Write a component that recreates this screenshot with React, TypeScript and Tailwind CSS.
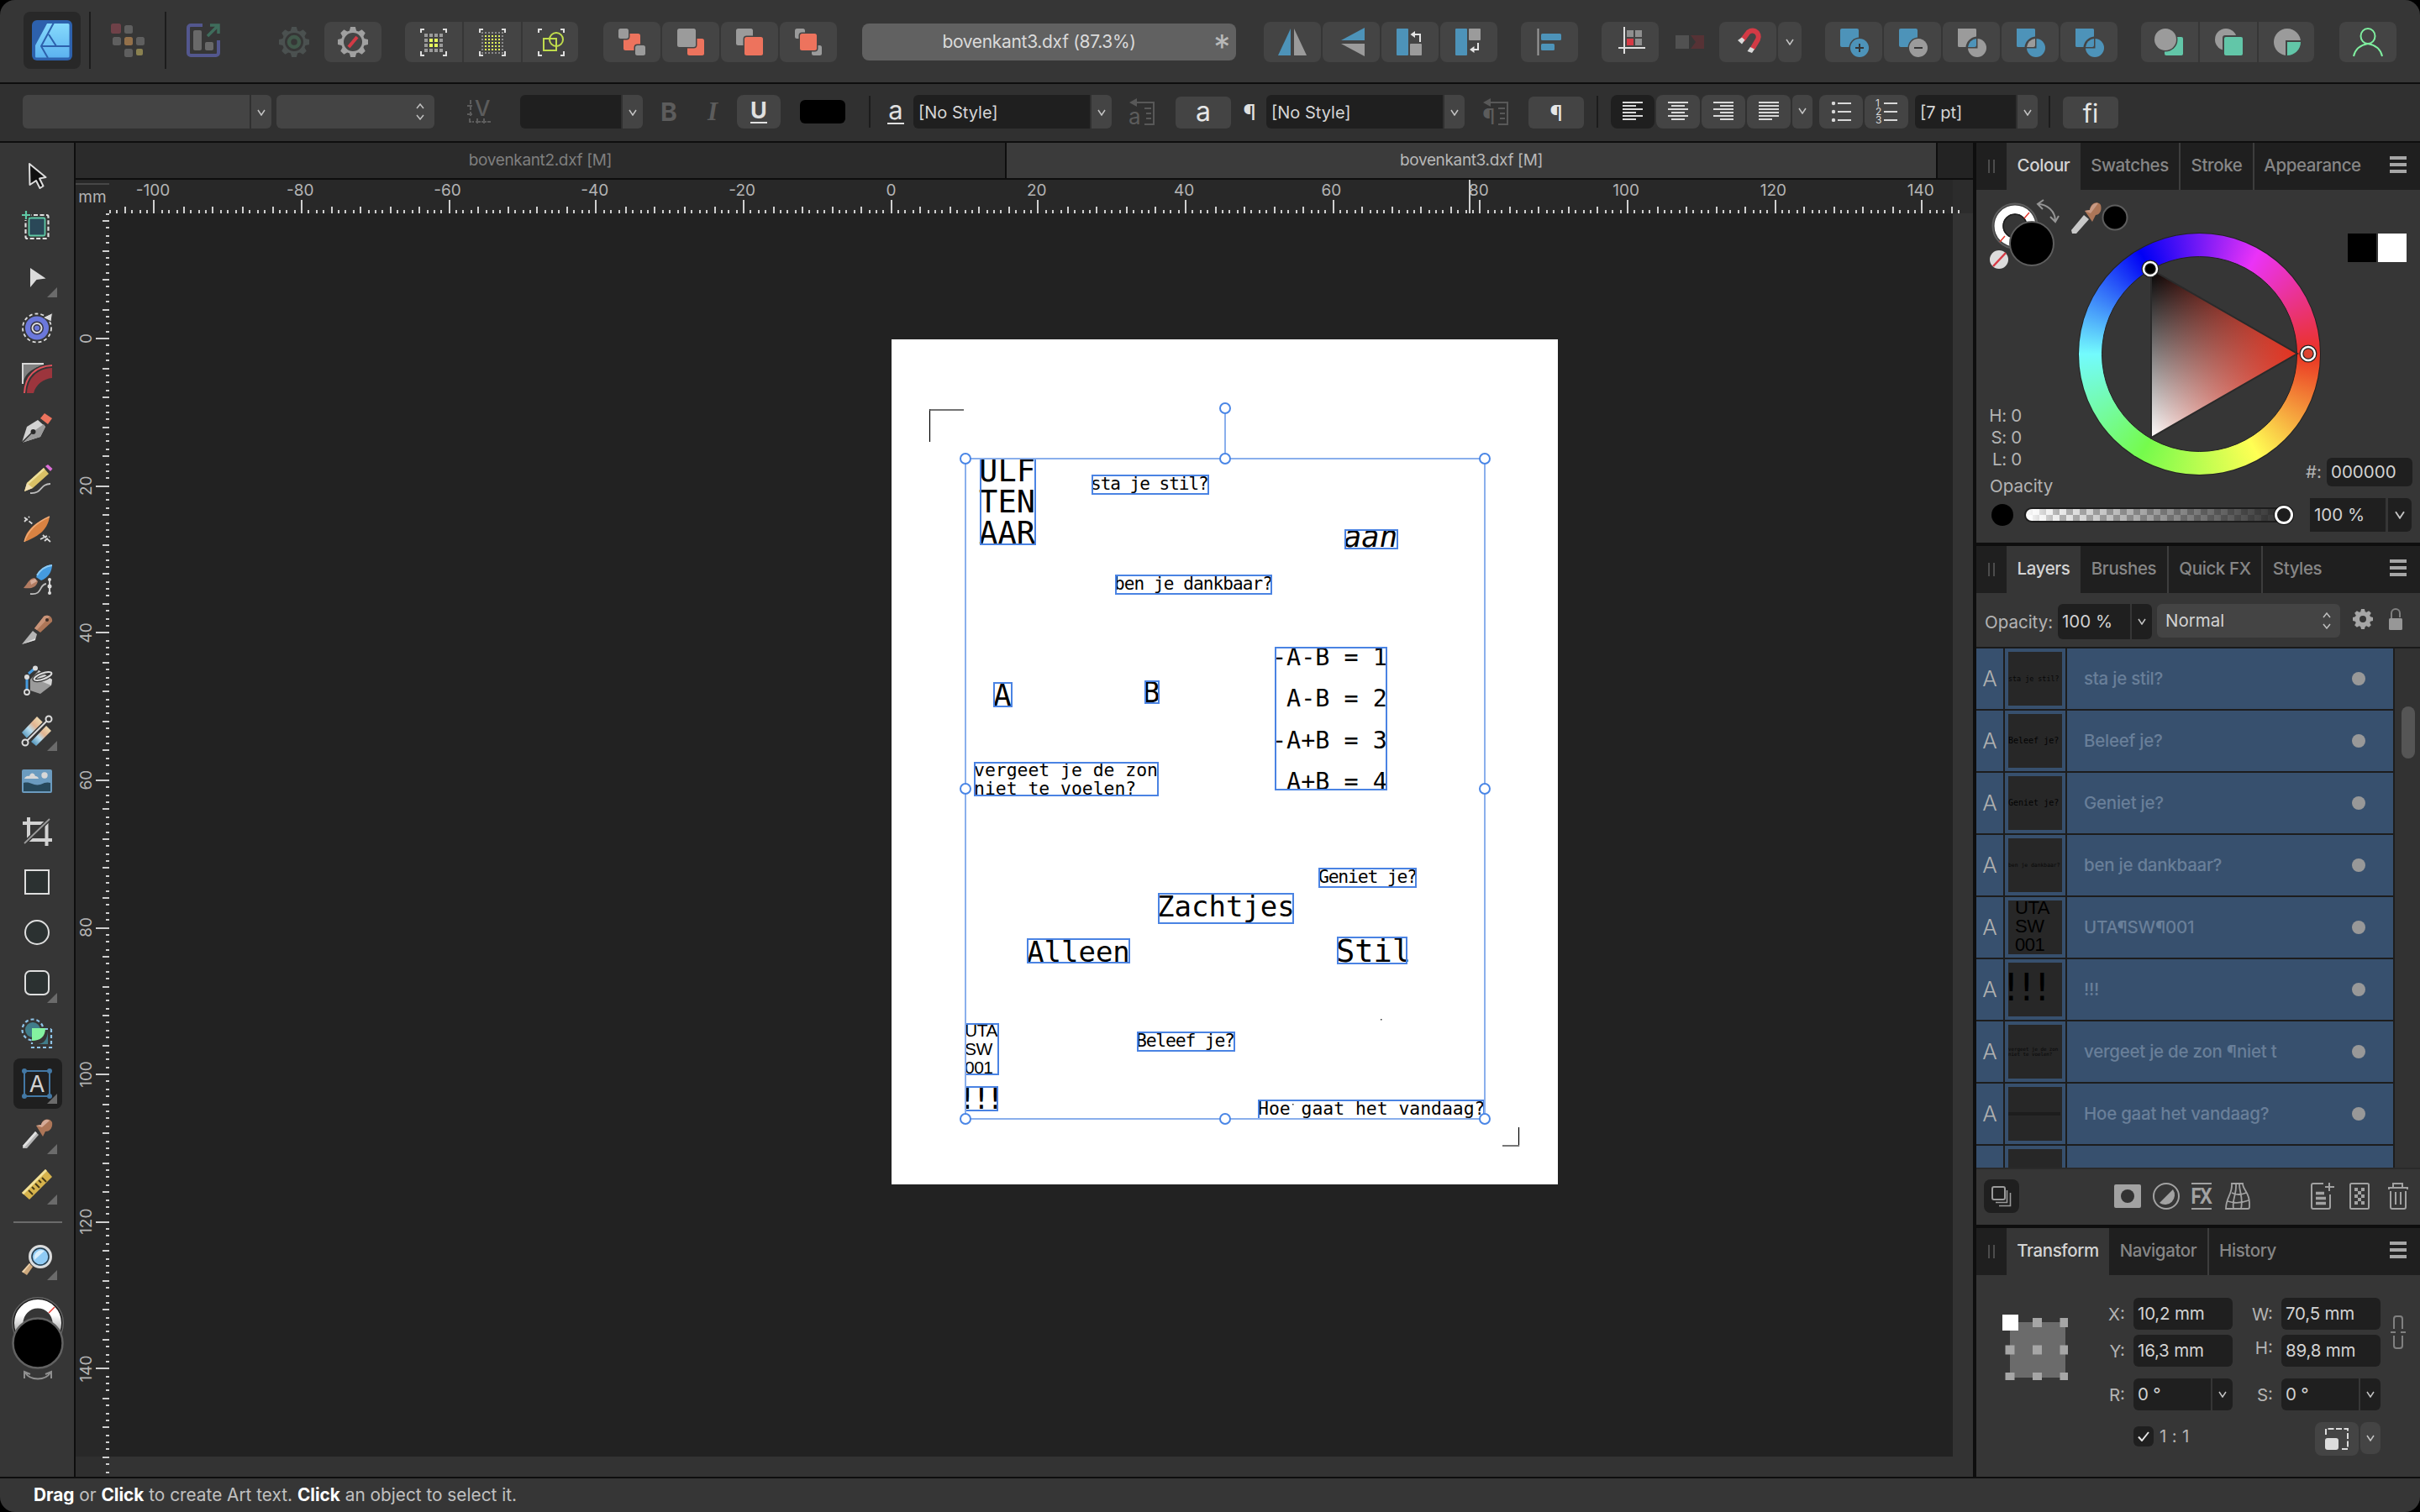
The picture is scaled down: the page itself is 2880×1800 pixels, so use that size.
import React from "react";

type Kids = { children?: React.ReactNode };

const BLUE = "#4d93b9";
const GRAY = "#9b9b9b";
const ORANGE = "#ed735d";
const TEAL = "#62c6a8";
const BTN = "#444444";

/* 40x40 icon canvas */
function Icon({ children, cls = "" }: Kids & { cls?: string }) {
  return (
    <svg viewBox="0 0 40 40" className={`w-10 h-10 shrink-0 ${cls}`} fill="none">
      {children}
    </svg>
  );
}

function TB({ children, cls = "rounded-lg", w = "w-[68px]" }: Kids & { cls?: string; w?: string }) {
  return <div className={`h-12 shrink-0 bg-[#444444] flex items-center justify-center ${w} ${cls}`}>{children}</div>;
}

function Chevron({ cls = "" }: { cls?: string }) {
  return (
    <svg viewBox="0 0 10 8" className={`w-[10px] h-2 shrink-0 ${cls}`} fill="none">
      <path d="M1 1L5 7L9 1" stroke="#c4c4c4" strokeWidth="1.5" />
    </svg>
  );
}

function UpDown() {
  return (
    <svg viewBox="0 0 10 20" className="w-[10px] h-5 shrink-0" fill="none">
      <path d="M1 6L5 1L9 6M1 14L5 19L9 14" stroke="#c0c0c0" strokeWidth="1.5" />
    </svg>
  );
}

function GearShape({ cx, cy, r, color, hole }: { cx: number; cy: number; r: number; color: string; hole: number }) {
  const teeth = [0, 45, 90, 135, 180, 225, 270, 315];
  return (
    <g fill={color}>
      {teeth.map((a) => (
        <path key={a} d={`M${cx - r * 0.24} ${cy - r * 0.7}L${cx - r * 0.16} ${cy - r}H${cx + r * 0.16}L${cx + r * 0.24} ${cy - r * 0.7}Z`} transform={`rotate(${a} ${cx} ${cy})`} />
      ))}
      <circle cx={cx} cy={cy} r={(r * 0.78 + hole) / 2} fill="none" stroke={color} strokeWidth={r * 0.78 - hole} />
    </g>
  );
}

function Brackets() {
  return <path d="M5 9V5H9M31 5H35V9M35 31V36H31M9 36H5V31" stroke="#dedede" strokeWidth="2" />;
}

function Divider({ cls }: { cls: string }) {
  return <div className={`w-[2px] shrink-0 bg-[#1c1c1c] ${cls}`} />;
}

function BoolIcon({ sq, ci, ov, sign }: { sq: string; ci: string; ov?: string; sign?: string }) {
  return (
    <Icon>
      <rect x="4" y="4" width="22" height="22" rx="2" fill={sq} />
      <circle cx="27" cy="27" r="12.5" fill={BTN} />
      <circle cx="27" cy="27" r="11" fill={ci} />
      {ov && (
        <>
          <path d="M12 27.500V26A14 14 0 0 1 26 12H27.500V27.500Z" fill={BTN} />
          <path d="M4 4H24A2 2 0 0 1 26 6V13.500A14 14 0 0 0 13.500 26H6A2 2 0 0 1 4 24Z" fill={sq} />
          <path d="M26 16A11 11 0 0 0 16 26H24A2 2 0 0 0 26 24Z" fill={ov} />
        </>
      )}
      {sign && <path d={sign} stroke="#353535" strokeWidth="2" />}
    </Icon>
  );
}

function TopBar() {
  return (
    <div className="h-[98px] shrink-0 bg-[#363636] flex items-start">
      <div className="mt-[14px] ml-7 w-[68px] h-[68px] shrink-0 rounded-lg bg-[#282828] flex items-center justify-center">
        <svg viewBox="0 0 48 48" className="w-12 h-12" fill="none">
          <defs>
            <linearGradient id="lg" x1="0" y1="0" x2="0" y2="1">
              <stop offset="0" stopColor="#86dafc" />
              <stop offset="1" stopColor="#5cb2f0" />
            </linearGradient>
          </defs>
          <rect width="48" height="48" rx="6" fill="#2d61ad" />
          <path d="M18 4H43a1.5 1.5 0 0 1 1.5 1.5V43a1.5 1.5 0 0 1-1.5 1.5H5a1 1 0 0 1-1-1V30Z" fill="url(#lg)" />
          <path d="M26 3L11 31L19 45M20 17L29 31M11 31H45" stroke="#2d61ad" strokeWidth="2" />
        </svg>
      </div>
      <Divider cls="ml-[10px] mt-[14px] h-[68px]" />
      <Icon cls="ml-6 mt-7">
        <rect x="0" y="0" width="12" height="12" rx="2.5" fill="#6f4148" />
        <rect x="16" y="2" width="10" height="10" rx="2.5" fill="#5f5f5f" />
        <rect x="2" y="16" width="10" height="10" rx="2.5" fill="#5f5f5f" />
        <rect x="16" y="16" width="10" height="10" rx="2.5" fill="#93704a" />
        <rect x="30" y="16" width="10" height="10" rx="2.5" fill="#5f5f5f" />
        <rect x="16" y="30" width="10" height="10" rx="2.5" fill="#5f5f5f" />
        <rect x="30" y="30" width="8" height="8" rx="2" fill="#8a8150" />
      </Icon>
      <Divider cls="ml-6 mt-[14px] h-[68px]" />
      <Icon cls="ml-6 mt-7">
        <path d="M19 2H5a3 3 0 0 0-3 3V35a3 3 0 0 0 3 3H35a3 3 0 0 0 3-3V20" stroke="#53578e" strokeWidth="4" />
        <rect x="8" y="8" width="10" height="24" rx="2" fill="#696969" />
        <rect x="22" y="22" width="10" height="10" rx="2" fill="#696969" />
        <path d="M25 15L37 3M28 2H38V12" stroke="#3f6d5c" strokeWidth="3.5" />
      </Icon>
      <Icon cls="ml-[68px] mt-[30px]">
        <GearShape cx={20} cy={20} r={18} color="#4b5150" hole={11} />
        <circle cx="20" cy="20" r="6" stroke="#41584a" strokeWidth="4.5" />
      </Icon>
      <div className="ml-4 mt-[26px] flex">
        <TB>
          <Icon>
            <GearShape cx={20} cy={20} r={18} color="#a0a0a0" hole={11} />
            <path d="M15 26L25 14" stroke="#d33a45" strokeWidth="4" />
          </Icon>
        </TB>
      </div>
      <div className="ml-7 mt-[26px] flex gap-[2px]">
        <TB cls="rounded-l-lg">
          <Icon>
            <Brackets />
            {[0, 1, 2, 3].map((i) =>
              [0, 1, 2, 3].map((j) => (
                <rect key={`${i}${j}`} x={9 + i * 6} y={10 + j * 6} width="4" height="4" fill={(i === 1 || i === 2) && (j === 1 || j === 2) ? "#e6fb5d" : "#9b9b9b"} />
              ))
            )}
          </Icon>
        </TB>
        <TB cls="">
          <Icon>
            <Brackets />
            {[0, 1, 2, 3, 4, 5, 6].map((i) =>
              [0, 1, 2, 3, 4, 5, 6].map((j) => (
                <rect key={`${i}${j}`} x={7 + i * 4} y={8 + j * 4} width="2" height="2" fill={i > 0 && i < 6 && j > 0 && j < 6 ? "#dff25a" : "#8c8c8c"} />
              ))
            )}
          </Icon>
        </TB>
        <TB cls="rounded-r-lg" w="w-[66px]">
          <Icon cls="translate-x-px">
            <Brackets />
            <circle cx="26" cy="17" r="8" stroke="#c0dc4c" strokeWidth="2" />
            <rect x="11" y="16" width="15" height="14" stroke="#c0dc4c" strokeWidth="2" />
          </Icon>
        </TB>
      </div>
      <div className="ml-[30px] mt-[26px] flex gap-[2px]">
        <TB>
          <Icon>
            <rect x="10" y="10" width="20" height="20" rx="2.5" fill={ORANGE} />
            <rect x="2.5" y="2.5" width="15" height="15" rx="4" fill={BTN} />
            <rect x="22.5" y="22.5" width="15" height="15" rx="4" fill={BTN} />
            <rect x="4" y="4" width="12" height="12" rx="2.5" fill={GRAY} />
            <rect x="24" y="24" width="12" height="12" rx="2.5" fill={GRAY} />
          </Icon>
        </TB>
        <TB>
          <Icon>
            <rect x="16" y="16" width="20" height="20" rx="2.5" fill={ORANGE} />
            <rect x="2.5" y="2.5" width="25" height="25" rx="4" fill={BTN} />
            <rect x="4" y="4" width="22" height="22" rx="2.5" fill={GRAY} />
          </Icon>
        </TB>
        <TB>
          <Icon>
            <rect x="4" y="4" width="20" height="20" rx="2.5" fill={GRAY} />
            <rect x="12.5" y="12.5" width="25" height="25" rx="4" fill={BTN} />
            <rect x="14" y="14" width="22" height="22" rx="2.5" fill={ORANGE} />
          </Icon>
        </TB>
        <TB>
          <Icon>
            <rect x="4" y="4" width="12" height="12" rx="2.5" fill={GRAY} />
            <rect x="24" y="24" width="12" height="12" rx="2.5" fill={GRAY} />
            <rect x="8.5" y="8.5" width="23" height="23" rx="4" fill={BTN} />
            <rect x="10" y="10" width="20" height="20" rx="2.5" fill={ORANGE} />
          </Icon>
        </TB>
      </div>
      <div className="ml-[30px] mt-7 w-[445px] h-11 shrink-0 rounded-lg bg-[#616161] flex items-center text-[21px] tracking-[-0.32px] text-[#dadada]">
        <div className="flex-1 text-center pr-[24px]"><span className="whitespace-nowrap">bovenkant3.dxf (87.3%)</span></div>
        <div className="w-0 h-[30px] relative">
          <span className="absolute right-[7px] top-[-1px] text-[40px] leading-[44px] text-[#b8b8b8]">*</span>
        </div>
      </div>
      <div className="ml-[33px] mt-[26px] flex gap-[2px]">
        <TB>
          <Icon>
            <path d="M18 4V36H3Z" fill={BLUE} />
            <path d="M22 4V36H37Z" fill={GRAY} />
          </Icon>
        </TB>
        <TB>
          <Icon>
            <path d="M36 3V18H8Z" fill={BLUE} />
            <path d="M36 37V22H8Z" fill={GRAY} />
          </Icon>
        </TB>
        <TB>
          <Icon>
            <rect x="4" y="4" width="14" height="32" rx="1" fill={BLUE} />
            <rect x="20" y="22" width="14" height="14" rx="1" fill={GRAY} />
            <path d="M32 20V11H24" stroke="#e4e4e4" strokeWidth="2" />
            <path d="M20.500 11L26 7V15Z" fill="#e4e4e4" />
          </Icon>
        </TB>
        <TB>
          <Icon>
            <rect x="4" y="4" width="14" height="32" rx="1" fill={BLUE} />
            <rect x="20" y="4" width="14" height="14" rx="1" fill={GRAY} />
            <path d="M31 21V29H25" stroke="#e4e4e4" strokeWidth="2" />
            <path d="M21 29L26.500 25V33Z" fill="#e4e4e4" />
          </Icon>
        </TB>
      </div>
      <div className="ml-7 mt-[26px] flex">
        <TB>
          <Icon>
            <path d="M6.500 4V36" stroke="#9b9b9b" strokeWidth="2" />
            <rect x="10" y="10" width="24" height="8" rx="1.500" fill={BLUE} />
            <rect x="10" y="22" width="16" height="8" rx="1.500" fill={BLUE} />
          </Icon>
        </TB>
      </div>
      <div className="ml-7 mt-[26px] flex">
        <TB>
          <Icon>
            <path d="M13 2V34M6 27H38" stroke="#e0e0e0" strokeWidth="2" />
            <rect x="16" y="6" width="8" height="8" fill="#8f8f8f" />
            <rect x="26" y="6" width="8" height="8" fill="#8f8f8f" />
            <rect x="16" y="16" width="8" height="8" fill="#d63a45" />
            <rect x="26" y="16" width="8" height="8" fill="#8f8f8f" />
          </Icon>
        </TB>
        <div className="w-[72px] h-12 flex items-center justify-center">
          <Icon>
            <rect x="4" y="12" width="16" height="16" fill="#515151" />
            <path d="M22 12H38V28H22L28 20Z" fill="#563235" />
          </Icon>
        </div>
        <TB>
          <Icon>
            <path d="M13.500 18L19 10.500A7 7 0 0 1 32 17L25.500 28" stroke="#d33a45" strokeWidth="6" />
            <path d="M8 18L13 14.500L16.500 17.500L13 22.500ZM19.500 31L23 26L28 28.500L25 33Z" fill="#d9d9d9" />
          </Icon>
        </TB>
        <div className="ml-[2px] w-7 h-12 rounded-lg bg-[#444444] flex items-center justify-center"><Chevron /></div>
      </div>
      <div className="ml-7 mt-[26px] flex gap-[2px]">
        <TB><BoolIcon sq={BLUE} ci={BLUE} sign="M27 22V32M22 27H32" /></TB>
        <TB><BoolIcon sq={BLUE} ci={GRAY} sign="M22 27H32" /></TB>
        <TB><BoolIcon sq={GRAY} ci={GRAY} ov={BLUE} /></TB>
        <TB><BoolIcon sq={BLUE} ci={BLUE} ov={GRAY} /></TB>
        <TB><BoolIcon sq={BLUE} ci={BLUE} ov={BLUE} /></TB>
      </div>
      <div className="ml-7 mt-[26px] flex gap-[2px]">
        <TB cls="rounded-l-lg">
          <Icon>
            <rect x="14" y="14" width="22" height="22" rx="2" fill={TEAL} />
            <circle cx="15" cy="17" r="14.500" fill={BTN} />
            <circle cx="15" cy="17" r="13" fill={GRAY} />
          </Icon>
        </TB>
        <TB cls="">
          <Icon>
            <circle cx="17" cy="17" r="13" fill={GRAY} />
            <rect x="13" y="12" width="26" height="26" rx="3" fill={BTN} />
            <rect x="15" y="14" width="22" height="22" rx="2" fill={TEAL} />
          </Icon>
        </TB>
        <TB cls="rounded-r-lg" w="w-[66px]">
          <Icon cls="translate-x-px">
            <circle cx="20" cy="20" r="16" fill={GRAY} />
            <path d="M18 38V18H38V38Z" fill={BTN} />
            <path d="M20 36V20H36A16 16 0 0 1 20 36Z" fill={TEAL} />
          </Icon>
        </TB>
      </div>
      <div className="ml-[30px] mt-[26px] flex">
        <TB>
          <Icon>
            <ellipse cx="20" cy="13" rx="8.500" ry="9" stroke="#7fee9f" strokeWidth="2" />
            <path d="M3 37C5 28 11 23.500 20 22C29 23.500 35 28 37 37" stroke="#7fee9f" strokeWidth="2" />
          </Icon>
        </TB>
      </div>
    </div>
  );
}

function DD({ cls = "" }: { cls?: string }) {
  return <div className={`ml-[2px] w-6 h-10 shrink-0 rounded-r-md bg-[#444444] flex items-center justify-center ${cls}`}><Chevron cls="mt-[2px]" /></div>;
}

function AlignIcon({ rows }: { rows: [number, number][] }) {
  return (
    <svg viewBox="0 0 24 22" className="w-6 h-[22px] mb-[2px]">
      {rows.map(([x, w], i) => (
        <rect key={i} x={x} y={i * 4} width={w} height="2" fill="#d8d8d8" />
      ))}
    </svg>
  );
}

function StyleIcon({ ch, cls }: { ch: string; cls: string }) {
  return (
    <div className={`relative w-[30px] h-8 shrink-0 ${cls}`}>
      <svg viewBox="0 0 30 32" className="w-[30px] h-8" fill="none">
        <path d="M6 5H29V31H18M18 12H26M20 18H26M20 24H26" stroke="#585858" strokeWidth="2" />
        <path d="M0 5L9 0V10Z" fill="#585858" />
      </svg>
      <span className="absolute left-[-1px] top-[7px] text-[26px] leading-[30px] text-[#5c5c5c]">{ch}</span>
    </div>
  );
}

function ContextBar() {
  const btn = "w-[52px] h-10 shrink-0 rounded-lg bg-[#444444] flex items-center justify-center";
  return (
    <div className="h-[68px] shrink-0 bg-[#303030] flex items-center pb-[2px] text-[20px] text-[#d6d6d6]">
      <div className="ml-[27px] w-[270px] h-10 rounded-l-md bg-[#444444] shrink-0" />
      <DD />
      <div className="ml-[6px] w-[188px] h-10 rounded-md bg-[#444444] flex items-center justify-end pr-3 shrink-0"><UpDown /></div>
      <div className="relative ml-[39px] w-[28px] h-[32px] shrink-0">
        <svg viewBox="0 0 28 32" className="w-7 h-8" fill="none">
          <path d="M4 2V22" stroke="#5c5c5c" strokeWidth="2" strokeDasharray="5 2" />
          <path d="M0 9H6M0 19H6" stroke="#5c5c5c" strokeWidth="2" />
          <path d="M3 24V28H8M10 28H28M12 24V31M20 24V31" stroke="#5c5c5c" strokeWidth="2" strokeDasharray="6 1" />
        </svg>
        <span className="absolute left-[9px] top-[-3px] text-[26px] leading-[30px] font-medium text-[#5c5c5c]">V</span>
      </div>
      <div className="ml-[35px] w-[120px] h-10 rounded-l-md bg-[#1f1f1f] shrink-0" />
      <DD />
      <div className="ml-[18px] w-[26px] text-center text-[30px] leading-10 font-bold text-[#5c5c5c]">B</div>
      <div className="ml-[26px] w-[26px] text-center text-[31px] leading-10 italic font-['Liberation_Serif',serif] font-bold text-[#5c5c5c]">I</div>
      <div className={`ml-[16px] ${btn}`}>
        <span className="flex flex-col items-center">
          <span className="text-[27px] leading-[26px] font-bold text-[#e0e0e0]">U</span>
          <span className="w-5 h-[2px] bg-[#e0e0e0]" />
        </span>
      </div>
      <div className="ml-[23px] w-[54px] h-7 rounded-md bg-black shrink-0" />
      <Divider cls="ml-7 h-[38px]" />
      <div className="ml-5 w-5 flex flex-col items-center">
        <span className="text-[31px] leading-[30px] text-[#e0e0e0] -mt-[3px]">a</span>
        <span className="w-5 h-[2px] bg-[#e0e0e0]" />
      </div>
      <div className="ml-[11px] w-[210px] h-10 rounded-l-md bg-[#1f1f1f] flex items-center pl-[6px] pt-[2px] shrink-0">[No Style]</div>
      <DD />
      <StyleIcon ch="a" cls="ml-[21px]" />
      <div className="ml-[25px] mt-[2px] w-[66px] h-[38px] rounded-md bg-[#444444] flex items-center justify-center text-[32px] leading-[32px] pb-[3px] text-[#e6e6e6] shrink-0">a</div>
      <div className="ml-[16px] w-[12px] flex justify-center pt-[2px] text-[26px] leading-8 text-[#e0e0e0]">¶</div>
      <div className="ml-[14px] w-[210px] h-10 rounded-l-md bg-[#1f1f1f] flex items-center pl-[6px] pt-[2px] shrink-0">[No Style]</div>
      <DD />
      <StyleIcon ch="¶" cls="ml-[22px]" />
      <div className="ml-[24px] mt-[2px] w-[66px] h-[38px] rounded-md bg-[#444444] flex items-center justify-center text-[26px] leading-8 pt-px text-[#e6e6e6] shrink-0">¶</div>
      <Divider cls="ml-[15px] h-[38px]" />
      <div className="ml-[15px] w-[52px] h-10 shrink-0 rounded-lg bg-[#1f1f1f] flex items-center justify-center">
        <AlignIcon rows={[[0, 24], [0, 16], [0, 24], [0, 16], [0, 24], [0, 16]]} />
      </div>
      <div className={`ml-[2px] ${btn}`}><AlignIcon rows={[[0, 24], [4, 16], [0, 24], [4, 16], [0, 24], [4, 16]]} /></div>
      <div className={`ml-[2px] ${btn}`}><AlignIcon rows={[[0, 24], [8, 16], [0, 24], [8, 16], [0, 24], [8, 16]]} /></div>
      <div className={`ml-[2px] ${btn}`}><AlignIcon rows={[[0, 24], [0, 24], [0, 24], [0, 24], [0, 24], [0, 16]]} /></div>
      <div className="ml-[2px] w-6 h-10 shrink-0 rounded-md bg-[#444444] flex items-center justify-center"><Chevron cls="mb-[2px]" /></div>
      <div className={`ml-[8px] ${btn}`}>
        <svg viewBox="0 0 24 24" className="w-6 h-6" fill="#d8d8d8">
          {[0, 10, 20].map((y) => (
            <g key={y}><circle cx="3" cy={y + 2} r="2.200" /><rect x="8" y={y + 1} width="16" height="2" /></g>
          ))}
        </svg>
      </div>
      <div className={`ml-[2px] ${btn}`}>
        <div className="flex flex-col">
          {["1", "2", "3"].map((n) => (
            <div key={n} className="flex items-center h-[10px] gap-[3px]">
              <span className="text-[12px] leading-[10px] w-[7px] text-[#d8d8d8]">{n}</span>
              <span className="w-4 h-[2px] bg-[#d8d8d8]" />
            </div>
          ))}
        </div>
      </div>
      <div className="ml-[8px] w-[120px] h-10 rounded-l-md bg-[#1f1f1f] flex items-center pl-[6px] pt-[2px] shrink-0">[7 pt]</div>
      <DD />
      <Divider cls="ml-[13px] h-[38px]" />
      <div className="ml-[15px] mt-[2px] w-[66px] h-[38px] rounded-md bg-[#444444] flex items-center justify-center text-[30px] leading-8 pt-px text-[#e6e6e6] shrink-0">fi</div>
    </div>
  );
}

/* ---------- left tool strip ---------- */

function Tool({ children, more, active }: Kids & { more?: boolean; active?: boolean }) {
  return (
    <div className={`relative h-[60px] w-[58px] flex items-center justify-center shrink-0 ${active ? "rounded-lg bg-[#1f1f1f]" : ""}`}>
      <Icon cls="-translate-x-px">{children}</Icon>
      {more && (
        <svg viewBox="0 0 12 12" className="absolute right-[6px] bottom-[6px] w-3 h-3"><path d="M12 0V12H0Z" fill="#6b6b6b" /></svg>
      )}
    </div>
  );
}

function ToolStrip() {
  return (
    <div className="w-[88px] shrink-0 bg-[#363636] flex flex-col items-center pt-[10px] pl-[2px]">
      <Tool><path d="M11 5L30.500 21L23 22.500L27.500 31.500L23.500 34L19 25L11.500 30Z" fill="#111" stroke="#dcdcdc" strokeWidth="2" strokeLinejoin="round" /></Tool>
      <Tool>
        <rect x="6.500" y="6" width="27" height="28" rx="2" stroke="#e0e0e0" strokeWidth="2.200" strokeDasharray="5 2.500" />
        <rect x="10.500" y="9.500" width="19" height="21" rx="1.500" fill="#2a4858" stroke="#5fc9a5" strokeWidth="1.800" />
        <path d="M7 0V12M1 6H13" stroke="#363636" strokeWidth="5" /><path d="M7 1V11M2 6H12" stroke="#5fc9a5" strokeWidth="2.200" />
      </Tool>
      <Tool more><path d="M12 9L30.500 21.500L19.500 23L12 32Z" fill="#dcdcdc" /></Tool>
      <Tool>
        <circle cx="20" cy="20.500" r="17" stroke="#dcdcdc" strokeWidth="1.800" strokeDasharray="4 3" />
        <circle cx="20" cy="20.500" r="14" fill="#6b78dc" />
        <circle cx="20" cy="20.500" r="5.500" stroke="#353546" strokeWidth="5" /><circle cx="20" cy="20.500" r="5.500" stroke="#dcdcdc" strokeWidth="2" />
        <path d="M27 8L38.500 2.500L37 13Z" fill="#dcdcdc" stroke="#363636" strokeWidth="1" />
      </Tool>
      <Tool>
        <path d="M4 4H36C20 5 7 12 4 24Z" fill="#808080" />
        <path d="M3 27V3H28" stroke="#d8d8d8" strokeWidth="2" />
        <path d="M5 38C6 18 18 6 38 5" stroke="#363636" strokeWidth="5" /><path d="M5 38C6 18 18 6 38 5" stroke="#e0525c" strokeWidth="2" />
        <path d="M8 38C9 20 20 9 38 8V20C28 21 19 27 16 38Z" fill="#9c353d" />
      </Tool>
      <Tool>
        <path d="M2 37L8 18L21 10L30 18L24 30Z" fill="#d2d2d2" /><path d="M2 37L15 24L28 15L30 18L24 30Z" fill="#9a9a9a" />
        <circle cx="15.500" cy="24" r="3" fill="#2a2a2a" /><path d="M2 37L15 24" stroke="#2a2a2a" strokeWidth="1.500" />
        <path d="M24 8L29 2L38 8L33 15Z" fill="#ed735d" />
      </Tool>
      <Tool>
        <path d="M5 35L8 25L28 7L34 14L15 31Z" fill="#d9c166" /><path d="M5 35L8 25L15 31Z" fill="#f1e0b4" /><path d="M8 25L28 7L29.500 9L10 26.500Z" fill="#eee09a" />
        <path d="M30 5L33 3L38.500 8L36 11Z" fill="#dc6fd8" />
        <path d="M12 37C27 38 23 26 36 26" stroke="#bdbdbd" strokeWidth="1.800" />
      </Tool>
      <Tool>
        <path d="M5 35C5 27 12 14 35 5C33 19 24 28 5 35Z" fill="#d98242" /><path d="M5 35C8 25 17 13 35 5" stroke="#f0ab76" strokeWidth="1.500" />
        <path d="M5 11L11 5M5 6L15 14M24 32L32 28M27 27L36 35M29 34L35 29" stroke="#dadada" strokeWidth="1.800" strokeDasharray="5 2" />
      </Tool>
      <Tool>
        <path d="M19 17C22 9 29 3 38 2C38 11 33 18 25 21Z" fill="#459be0" /><path d="M20 15C24 8 30 4 38 3" stroke="#8bcaf5" strokeWidth="2" />
        <path d="M4 30C9 25 10 19 17 18L21 22C19 30 13 31 4 30Z" fill="#b27c62" /><path d="M12 21L18 19L20 22L13 26Z" fill="#d5ab98" />
        <path d="M12 37C27 39 22 26 31 25" stroke="#bdbdbd" strokeWidth="1.800" />
        <path d="M35 20V36" stroke="#dcdcdc" strokeWidth="1.800" /><circle cx="35" cy="20" r="2" fill="#dcdcdc" /><circle cx="35" cy="28" r="2.500" fill="#dcdcdc" /><circle cx="35" cy="36" r="2" fill="#dcdcdc" />
      </Tool>
      <Tool>
        <path d="M2 37L15 21L20 25L18 32Z" fill="#b4b4b4" /><path d="M2 37L18 32L18 30Z" fill="#e2e2e2" />
        <path d="M17 18L28 4C33 1 39 4 38 10L24 23Z" fill="#ad7658" /><path d="M17 18L28 4C31 2 34 3 35 4L20 20Z" fill="#c99479" /><circle cx="32" cy="8" r="2" fill="#3c2c25" />
      </Tool>
      <Tool>
        <path d="M12 19L22 8L38 19L37 26L24 36L12 32Z" fill="#9b9b9b" /><path d="M22 8L38 19L37 26L18 18Z" fill="#d4d4d4" />
        <ellipse cx="27" cy="15" rx="11" ry="3.500" transform="rotate(-20 27 15)" stroke="#363636" strokeWidth="4.500" />
        <ellipse cx="27" cy="15" rx="11" ry="3.500" transform="rotate(-20 27 15)" stroke="#dcdcdc" strokeWidth="2" />
        <path d="M8 31V16M10 12L17 6" stroke="#459be0" strokeWidth="3" />
        <circle cx="8" cy="34" r="3" fill="#363636" stroke="#dcdcdc" strokeWidth="1.800" /><circle cx="8" cy="16" r="3" fill="#dcdcdc" /><circle cx="18" cy="5.500" r="3" fill="#dcdcdc" />
      </Tool>
      <Tool more>
        <defs>
          <linearGradient id="tg" x1="0" y1="1" x2="1" y2="0"><stop offset="0" stopColor="#2f7ba8" /><stop offset=".4" stopColor="#b9def0" /><stop offset=".6" stopColor="#e2b491" /><stop offset="1" stopColor="#f2e8bd" /></linearGradient>
        </defs>
        <path d="M2 22L20 3L27 10L9 30Z" fill="url(#tg)" /><path d="M13 33L31 14L37 20L19 38Z" fill="url(#tg)" />
        <path d="M6 34L34 6" stroke="#363636" strokeWidth="5" /><path d="M6 34L34 6" stroke="#dcdcdc" strokeWidth="2" />
        <circle cx="6" cy="34" r="3.500" fill="#363636" stroke="#dcdcdc" strokeWidth="2" /><circle cx="34" cy="6" r="3.500" fill="#363636" stroke="#dcdcdc" strokeWidth="2" />
      </Tool>
      <Tool>
        <rect x="2" y="6" width="36" height="28" rx="2" fill="#6b9bbf" /><path d="M4 22C13 20 15 26 24 24C30 21 33 21 36 22V32H4Z" fill="#27485a" />
        <path d="M5 17H22C21 14 19 14 18 14C16 9 12 10 11 14C8 13 6 15 5 17Z" fill="#d8d8d8" /><circle cx="29" cy="13" r="3.700" fill="#d8d8d8" />
      </Tool>
      <Tool>
        <path d="M3 10H31.500V37M10 3V30H38" stroke="#d2d2d2" strokeWidth="4" /><path d="M3 36L36 4" stroke="#363636" strokeWidth="5" /><path d="M5 34L35 5" stroke="#9b9b9b" strokeWidth="1.800" />
      </Tool>
      <Tool><rect x="6" y="6" width="28" height="28" fill="#2b3131" stroke="#dedede" strokeWidth="2" /></Tool>
      <Tool><circle cx="20" cy="20" r="14" fill="#2b3131" stroke="#dedede" strokeWidth="2" /></Tool>
      <Tool more><rect x="6" y="6" width="28" height="28" rx="6" fill="#2b3131" stroke="#dedede" strokeWidth="2" /></Tool>
      <Tool>
        <circle cx="15" cy="16" r="12.500" stroke="#8fc4e8" strokeWidth="2.200" strokeDasharray="4 3" /><circle cx="15" cy="16" r="9" fill="#417d8a" />
        <path d="M15 15H37V37H15Z" fill="#363636" /><path d="M20 33C28 33 32 28 33 18V33Z" fill="#417d8a" />
        <path d="M37 15V37H14V31M29 15H37" stroke="#8fc4e8" strokeWidth="2.200" strokeDasharray="4 3" />
        <path d="M14 14H30C30 24 24 29 14 29Z" fill="#84f3a0" />
      </Tool>
      <Tool active more>
        <rect x="5" y="5" width="30" height="30" stroke="#4378a4" strokeWidth="2" />
        <g fill="#4378a4"><circle cx="5" cy="5" r="3" /><circle cx="35" cy="5" r="3" /><circle cx="5" cy="35" r="3" /><circle cx="35" cy="35" r="3" /></g>
        <text x="20" y="29.500" textAnchor="middle" fontSize="27" fontFamily="Inter" fill="#d2d2d2">A</text>
      </Tool>
      <Tool more>
        <path d="M3 34L18 17L22 21L8 37H3Z" fill="#b4b4b4" /><path d="M3 34L18 17L20 19L5 36Z" fill="#e2e2e2" />
        <path d="M19 10L25 9C26 2 35 0 38 6C39 12 36 17 30 17L27 23Z" fill="#ad7658" /><path d="M19 10L25 9C27 3 32 2 35 4L26 12Z" fill="#d5ab98" />
      </Tool>
      <Tool more>
        <path d="M2 30L30 2L38 11L11 38Z" fill="#d6b34c" /><path d="M2 30L30 2L32 4L4 32Z" fill="#f2e29a" />
        <path d="M10 27L15 32M14 23L17 26M18 19L23 24M22 15L25 18M26 12L31 17" stroke="#463a18" strokeWidth="2" />
      </Tool>
      <div className="w-[58px] h-[2px] bg-[#6b6b6b] mt-[14px] mb-[14px] shrink-0" />
      <Tool more>
        <path d="M2 34L11 24L15 28L8 38Z" fill="#cda87c" /><path d="M2 34L11 24L12 25L4 35Z" fill="#ecd2ad" />
        <circle cx="24" cy="16" r="12.500" fill="#8fcbf5" stroke="#dcdcdc" strokeWidth="3" /><circle cx="24" cy="16" r="10" stroke="#2a3b48" strokeWidth="1.500" />
        <path d="M17 20A9 9 0 0 1 29 9Z" fill="#d9effc" />
      </Tool>
      <svg viewBox="0 0 66 104" className="w-[66px] h-[104px] mt-[14px] shrink-0" fill="none">
        <defs><linearGradient id="rg" x1="0" y1="0" x2="0" y2="1"><stop offset=".3" stopColor="#fff" /><stop offset="1" stopColor="#777" /></linearGradient></defs>
        <circle cx="33" cy="31" r="30" stroke="#626262" strokeWidth="2" />
        <circle cx="33" cy="31" r="23" stroke="url(#rg)" strokeWidth="11" />
        <circle cx="33" cy="31" r="28.800" stroke="#222" strokeWidth="1.500" />
        <path d="M46 19L53 12" stroke="#e5392e" strokeWidth="1.500" />
        <circle cx="33" cy="55" r="29.500" fill="#000" stroke="#626262" strokeWidth="2.500" />
        <path d="M18 90C24 100 42 100 48 90M17 97V89L24 92M49 97V89L42 92" stroke="#8f8f8f" strokeWidth="2" />
      </svg>
    </div>
  );
}

/* ---------- rulers ---------- */

const MM = 8.766;

function tick(mm: number) {
  if (mm % 20 === 0) return 16;
  if (mm % 4 === 0) return 8;
  return 4;
}

function HRuler() {
  const marks = Array.from({ length: 258 }, (_, i) => i - 106);
  return (
    <svg viewBox="0 0 2218 40" className="block w-[2218px] h-10 shrink-0 bg-[#282828]" fill="none">
      <rect x="2194" width="24" height="40" fill="#2c2c2c" />
      {marks.map((m) => {
        const x = 2 * Math.round((929.4 + m * MM) / 2);
        const h = tick(Math.abs(m));
        return x >= 0 && x < 2210 ? <rect key={m} x={x} y={40 - h} width="2" height={h} fill="#cfcfcf" /> : null;
      })}
      {[-100, -80, -60, -40, -20, 0, 20, 40, 60, 80, 100, 120, 140].map((m) => (
        <text key={m} x={928.5 + m * MM + (m === 0 ? 2 : 0)} y="18.5" textAnchor="middle" fontSize="19" fontFamily="Inter" fill="#b4b4b4">{m}</text>
      ))}
      <rect x="1618" width="2" height="40" fill="#cfcfcf" />
    </svg>
  );
}

function VRuler() {
  const marks = Array.from({ length: 172 }, (_, i) => i - 17);
  return (
    <svg viewBox="0 0 40 1504" className="block w-10 h-[1504px] shrink-0 bg-[#282828]" fill="none">
      <rect y="1480" width="40" height="24" fill="#2f2f2f" />
      {marks.map((m) => {
        const y = 2 * Math.round((148.2 + m * 8.76) / 2);
        const w = tick(Math.abs(m));
        return y >= 0 ? <rect key={m} x={40 - w} y={y} width={w} height="2" fill="#cfcfcf" /> : null;
      })}
      {[0, 20, 40, 60, 80, 100, 120, 140].map((m) => (
        <text key={m} transform={`translate(19 ${149 + m * 8.76}) rotate(-90)`} textAnchor="middle" fontSize="19" fontFamily="Inter" fill="#b4b4b4">{m}</text>
      ))}
    </svg>
  );
}

/* ---------- artboard ---------- */

type ArtText = {
  box: string;
  text: string[];
  type: string;
};

const artTexts: ArtText[] = [
  { box: "left-[105px] top-[141px] w-[67px] h-[104px]", text: ["ULF", "TEN", "AAR"], type: "text-[37px] leading-[36.9px] -top-[2px] -left-[1px] tracking-[0.1px]" },
  { box: "left-[238px] top-[161px] w-[140px] h-[24px]", text: ["sta je stil?"], type: "text-[21px] leading-[22px] top-0 -left-[1px] tracking-[-1px]" },
  { box: "left-[539px] top-[226px] w-[64px] h-[24px]", text: ["aan"], type: "text-[35.500px] leading-[36px] -top-[9px] -left-px italic" },
  { box: "left-[266px] top-[280px] w-[187px] h-[24px]", text: ["ben je dankbaar?"], type: "text-[21px] leading-[22px] top-0 -left-[1px] tracking-[-0.9px]" },
  { box: "left-[121px] top-[408px] w-[23px] h-[30px]", text: ["A"], type: "text-[36px] leading-[36px] -top-[2px] left-0" },
  { box: "left-[301px] top-[406px] w-[18px] h-[28px]", text: ["B"], type: "text-[34px] leading-[36px] -top-[4px] -left-[2px]" },
  { box: "left-[456px] top-[366px] w-[134px] h-[171px]", text: ["-A-B = 1", " A-B = 2", "-A+B = 3", " A+B = 4"], type: "text-[28.4px] leading-[49.4px] -top-[12px] -left-[3px]" },
  { box: "left-[98px] top-[503px] w-[220px] h-[41px]", text: ["vergeet je de zon", "niet te voelen?"], type: "text-[21.4px] leading-[21.9px] -top-[1px] left-0" },
  { box: "left-[508px] top-[629px] w-[117px] h-[24px]", text: ["Geniet je?"], type: "text-[21.4px] leading-[22px] top-0 left-0 tracking-[-1.2px]" },
  { box: "left-[317px] top-[659px] w-[162px] h-[37px]", text: ["Zachtjes"], type: "text-[34px] leading-[36px] -top-[2px] -left-[1px]" },
  { box: "left-[161px] top-[713px] w-[123px] h-[30px]", text: ["Alleen"], type: "text-[34px] leading-[36px] -top-[2px] left-0" },
  { box: "left-[530px] top-[711px] w-[84px] h-[33px]", text: ["Stil"], type: "text-[37px] leading-[36px] top-0 -left-[1px]" },
  { box: "left-[292px] top-[824px] w-[117px] h-[24px]", text: ["Beleef je?"], type: "text-[21.4px] leading-[22px] top-0 -left-[1px] tracking-[-1.2px]" },
  { box: "left-[436px] top-[905px] w-[270px] h-[24px]", text: ["Hoe gaat het vandaag?"], type: "text-[21.4px] leading-[22px] top-0 left-0" },
];

function Artboard() {
  const handles: [number, number][] = [[88, 142], [397, 142], [706, 142], [88, 535], [706, 535], [88, 928], [397, 928], [706, 928], [397, 82]];
  return (
    <div className="relative ml-[931px] mt-[150px] w-[793px] h-[1006px] bg-white text-black shrink-0">
      {artTexts.map((t) => (
        <div key={t.text[0]} className={`absolute ${t.box}`}>
          <div className={`absolute whitespace-pre font-['DejaVu_Sans_Mono',monospace] ${t.type}`}>
            {t.text.map((l) => <div key={l}>{l}</div>)}
          </div>
        </div>
      ))}
      <div className="absolute left-[87px] top-[814px] w-[41px] h-[62px]">
        <div className="absolute left-0 -top-[2px] font-['Liberation_Sans',sans-serif] text-[21px] leading-[22px] tracking-[-0.5px]">
          <div>UTA</div><div>SW</div><div>001</div>
        </div>
      </div>
      <div className="absolute left-[87px] top-[889px] w-[40px] h-[30px]">
        <div className="absolute -left-[8px] -top-[3px] font-['DejaVu_Sans_Mono',monospace] text-[37px] leading-[36px] tracking-[-5.600px]">!!!</div>
      </div>
      {artTexts.map((t) => (
        <div key={t.text[0]} className={`absolute border-2 border-[#4a83e3] ${t.box}`} />
      ))}
      <div className="absolute border-2 border-[#4a83e3] left-[87px] top-[814px] w-[41px] h-[62px]" />
      <div className="absolute border-2 border-[#4a83e3] left-[87px] top-[889px] w-[40px] h-[30px]" />
      <svg viewBox="0 0 793 1006" className="absolute inset-0 w-[793px] h-[1006px]" fill="none">
        <path d="M45.500 122V83" stroke="#000" strokeWidth="1.200" /><path d="M45 84H86" stroke="#444" strokeWidth="1.600" />
        <path d="M746.500 938V961" stroke="#000" strokeWidth="1.200" /><path d="M727 960H747" stroke="#777" strokeWidth="2" />
        <rect x="582" y="809" width="1.500" height="1.500" fill="#333" /><rect x="477" y="910" width="1.500" height="1.500" fill="#333" />
        <rect x="88" y="142" width="618" height="786" stroke="#8aafec" strokeWidth="2" />
        <path d="M397 82V142" stroke="#8aafec" strokeWidth="2" />
        {handles.map(([x, y]) => <circle key={`${x}-${y}`} cx={x} cy={y} r="6" fill="#fff" stroke="#4a86e6" strokeWidth="2" />)}
      </svg>
    </div>
  );
}

function DocumentArea() {
  return (
    <div className="w-[2258px] shrink-0 flex flex-col">
      <div className="h-[42px] flex shrink-0 text-[19px] tracking-[-0.35px]">
        <div className="w-[1106px] bg-[#2b2b2b] text-[#7f7f7f] flex items-center justify-center">bovenkant2.dxf [M]</div>
        <div className="w-[2px] bg-[#0e0e0e]" />
        <div className="w-[1106px] bg-[#3b3b3b] text-[#b8b8b8] flex items-center justify-center">bovenkant3.dxf [M]</div>
        <div className="w-[2px] bg-[#0e0e0e]" />
        <div className="flex-1 bg-[#232323]" />
      </div>
      <div className="h-[2px] bg-[#0e0e0e] shrink-0" />
      <div className="flex h-10 shrink-0">
        <div className="w-10 bg-[#282828] shrink-0 pt-1">
          <div className="h-[2px] bg-[#474747]" />
          <div className="text-[19px] leading-[30px] text-center text-[#b4b4b4]">mm</div>
        </div>
        <HRuler />
      </div>
      <div className="flex flex-1">
        <VRuler />
        <div className="flex-1 flex flex-col bg-[#333333]">
          <div className="w-[2194px] h-[1480px] bg-[#222222] flex items-start">
            <Artboard />
          </div>
        </div>
      </div>
    </div>
  );
}

/* ---------- right panels ---------- */

function PanelTabs({ tabs }: { tabs: { label: string; w: string }[] }) {
  return (
    <div className="h-14 shrink-0 bg-[#1f1f1f] flex items-stretch text-[20.5px] tracking-[-0.4px] font-medium">
      <div className="w-9 flex items-center justify-center gap-[4px] shrink-0">
        <span className="w-[2px] h-4 bg-[#4c4c4c]" />
        <span className="w-[2px] h-4 bg-[#4c4c4c]" />
      </div>
      {tabs.map((t, i) => (
        <div key={t.label} className={`flex items-center justify-center pb-px shrink-0 ${t.w} ${i === 0 ? "bg-[#363636] text-[#d4d4d4]" : "text-[#868686]"} ${i > 0 && i < tabs.length - 1 ? "border-r-2 border-[#3d3d3d]" : ""}`}>
          {t.label}
        </div>
      ))}
      <div className="ml-auto mr-4 flex flex-col justify-center gap-1 shrink-0 pb-[4px]">
        <span className="w-5 h-1 bg-[#a6a6a6]" /><span className="w-5 h-1 bg-[#a6a6a6]" /><span className="w-5 h-1 bg-[#a6a6a6]" />
      </div>
    </div>
  );
}

function ColourPanel() {
  return (
    <div className="h-[476px] shrink-0 flex flex-col bg-[#363636] text-[20.5px] text-[#b4b4b4]">
      <PanelTabs tabs={[{ label: "Colour", w: "w-[88px]" }, { label: "Swatches", w: "w-[119px]" }, { label: "Stroke", w: "w-[88px]" }, { label: "Appearance", w: "w-[138px]" }]} />
      <div className="flex h-[361px] shrink-0">
        <div className="w-[113px] shrink-0 flex flex-col">
          <svg viewBox="0 0 113 100" className="w-[113px] h-[100px] shrink-0" fill="none">
            <circle cx="46" cy="43" r="26.500" stroke="#5e5e5e" strokeWidth="2" />
            <circle cx="46" cy="43" r="19.500" stroke="#fff" strokeWidth="10" />
            <circle cx="46" cy="43" r="14" stroke="#1d1d1d" strokeWidth="1.500" />
            <path d="M57 34L63 27M28 62L34 55" stroke="#e5392e" strokeWidth="1.500" />
            <circle cx="66" cy="64" r="26" fill="#000" stroke="#5e5e5e" strokeWidth="2" />
            <circle cx="27" cy="83" r="11" fill="#dcdcdc" /><path d="M20 91L35 75" stroke="#d63a45" strokeWidth="2.500" />
            <path d="M73 17C84 17 94 25 94 37M80 12L73 17L79 23M88 32L94 38L98 31" stroke="#959595" strokeWidth="2" />
          </svg>
          <div className="mt-[156px] w-[54px] text-right leading-[26px] whitespace-nowrap tracking-[-0.3px]">
            <div>H: 0</div><div>S: 0</div><div>L: 0</div>
          </div>
          <div className="pl-4 leading-[38px]">Opacity</div>
        </div>
        <div className="relative flex-1">
          <svg viewBox="0 0 100 50" className="absolute left-0 top-[10px] w-[100px] h-[50px]" fill="none">
            <path d="M0 38L15 20L21 25L6 42H1Z" fill="#c8c8c8" /><path d="M16 15L22 14C23 5 32 3 35 8C37 15 33 20 29 20L25 28Z" fill="#ad7658" /><path d="M16 15L22 14C24 7 29 5 32 6L23 18Z" fill="#c99a84" />
            <circle cx="52" cy="23" r="14.500" fill="#000" stroke="#5e5e5e" strokeWidth="2" />
          </svg>
          <div className="absolute left-[8px] top-[51px] w-[289px] h-[289px] rounded-full bg-[#222] flex items-center justify-center">
            <div className="w-[287px] h-[287px] rounded-full flex items-center justify-center bg-[conic-gradient(from_90deg,#ea3323,#ffff54,#75fb4c,#73fbfd,#0000f5,#ea33f7,#ea3323)]">
              <div className="w-[233px] h-[233px] rounded-full bg-[#363636] border border-[#222]" />
            </div>
          </div>
          <svg viewBox="0 0 305 305" className="absolute left-0 top-[43px] w-[305px] h-[305px]" fill="none">
            <defs>
              <linearGradient id="bw" gradientUnits="userSpaceOnUse" x1="95" y1="51" x2="95" y2="253"><stop offset="0" stopColor="#000" /><stop offset="1" stopColor="#fff" /></linearGradient>
              <linearGradient id="red" gradientUnits="userSpaceOnUse" x1="95" y1="152" x2="269" y2="152"><stop offset="0" stopColor="#e6321f" stopOpacity="0" /><stop offset="1" stopColor="#e6321f" /></linearGradient>
            </defs>
            <path d="M95 52V252L269 152Z" fill="url(#bw)" /><path d="M95 52V252L269 152Z" fill="url(#red)" stroke="#2a2a2a" strokeWidth="2" />
            <circle cx="94" cy="51" r="8" fill="#000" stroke="#222" strokeWidth="5" /><circle cx="94" cy="51" r="8" stroke="#fff" strokeWidth="2.500" />
            <circle cx="282" cy="152" r="8" fill="#dd4430" stroke="#222" strokeWidth="5" /><circle cx="282" cy="152" r="8" stroke="#fff" strokeWidth="2.500" />
          </svg>
          <div className="absolute left-[329px] top-[52px] flex gap-[2px]">
            <div className="w-[34px] h-[34px] bg-black" /><div className="w-[34px] h-[34px] bg-white" />
          </div>
          <div className="absolute right-[9px] bottom-[8px] flex items-center gap-[6px]">
            <span>#:</span>
            <div className="w-[102px] h-[34px] rounded-md bg-[#1f1f1f] pl-[5px] leading-[34px] text-[#d2d2d2]">000000</div>
          </div>
        </div>
      </div>
      <div className="flex items-center h-[52px] shrink-0">
        <div className="ml-[18px] w-[26px] h-[26px] rounded-full bg-black shrink-0" />
        <div className="relative ml-[13px] w-[320px] h-[18px] rounded-full bg-[#1d1d1d] p-[2px] flex items-center shrink-0">
          <div className="w-full h-[14px] rounded-full bg-[linear-gradient(90deg,rgba(255,255,255,1),rgba(160,160,160,.2)_12%,rgba(70,70,70,.55)_50%,rgba(32,32,32,.95)),conic-gradient(#fff_25%,#b4b4b4_0_50%,#fff_0_75%,#b4b4b4_0)] [background-size:100%_100%,16px_14px]" />
          <div className="absolute right-0 top-[-2px] w-[22px] h-[22px] rounded-full border-[3px] border-white bg-[#1d1d1d] shadow-[0_0_0_1px_#111]" />
        </div>
        <div className="ml-[20px] w-[90px] h-10 bg-[#1f1f1f] pl-[5px] leading-[40px] text-[#d2d2d2] shrink-0">100 %</div>
        <div className="ml-[3px] w-7 h-10 bg-[#1f1f1f] rounded-r-md flex items-center justify-center shrink-0"><Chevron cls="scale-125" /></div>
      </div>
    </div>
  );
}

type Layer = { name: string; thumb: string[]; type: string };

const layers: Layer[] = [
  { name: "sta je stil?", thumb: ["sta je stil?"], type: "text-[8.400px] leading-[10px] top-[27px] left-0 opacity-80 font-['DejaVu_Sans_Mono',monospace]" },
  { name: "Beleef je?", thumb: ["Beleef je?"], type: "text-[10px] leading-[12px] top-[26px] left-0 opacity-90 font-['DejaVu_Sans_Mono',monospace]" },
  { name: "Geniet je?", thumb: ["Geniet je?"], type: "text-[10px] leading-[12px] top-[26px] left-0 opacity-90 font-['DejaVu_Sans_Mono',monospace]" },
  { name: "ben je dankbaar?", thumb: ["ben je dankbaar?"], type: "text-[6.400px] leading-[8px] top-[28px] left-0 opacity-80 font-['DejaVu_Sans_Mono',monospace]" },
  { name: "UTA¶SW¶001", thumb: ["UTA", "SW", "001"], type: "text-[22px] leading-[22px] -top-[2px] left-[8px] font-['Liberation_Sans',sans-serif] tracking-[-0.5px]" },
  { name: "!!!", thumb: ["!!!"], type: "text-[44px] leading-[44px] top-[8px] -left-[10px] tracking-[-8px] font-['DejaVu_Sans_Mono',monospace]" },
  { name: "vergeet je de zon ¶niet t", thumb: ["vergeet je de zon", "niet te voelen?"], type: "text-[5.800px] leading-[6px] top-[26px] left-0 opacity-80 font-['DejaVu_Sans_Mono',monospace]" },
  { name: "Hoe gaat het vandaag?", thumb: [], type: "top-[30px] left-0 w-[62px] h-[4px] bg-[#1d1d1d]" },
  { name: "", thumb: [], type: "hidden" },
];

function LayerRow({ layer }: { layer: Layer }) {
  return (
    <div className="h-[74px] shrink-0 flex border-b-2 border-[#1d1d1d]">
      <div className="w-8 bg-[#37506e] flex items-center justify-center text-[26px] font-light text-[#b0b0b0] pb-[2px]">{layer.name ? "A" : ""}</div>
      <div className="w-[2px] bg-[#1d1d1d]" />
      <div className="w-[72px] bg-[#37506e] p-1">
        <div className="relative w-16 h-16 bg-[#272727] overflow-hidden">
          <div className={`absolute whitespace-pre text-black ${layer.type}`}>
            {layer.thumb.map((l) => <div key={l}>{l}</div>)}
          </div>
        </div>
      </div>
      <div className="w-[2px] bg-[#1d1d1d]" />
      <div className="w-[388px] bg-[#37506e] flex items-center justify-between pl-5 pr-[33px] font-medium tracking-[-0.25px] text-[#697f99]">
        <span className="pt-px">{layer.name}</span>
        {layer.name && <span className="w-4 h-4 rounded-full bg-[#989898]" />}
      </div>
      <div className="w-[2px] bg-[#1d1d1d]" />
    </div>
  );
}

function LayersPanel() {
  return (
    <div className="h-[808px] shrink-0 flex flex-col bg-[#363636] text-[20.5px]">
      <PanelTabs tabs={[{ label: "Layers", w: "w-[88px]" }, { label: "Brushes", w: "w-[105px]" }, { label: "Quick FX", w: "w-[112px]" }, { label: "Styles", w: "w-[82px]" }]} />
      <div className="h-16 shrink-0 flex items-center pb-[2px] text-[#d2d2d2]">
        <span className="pl-[10px] w-[97px] shrink-0 text-[#b4b4b4] pt-[8px]">Opacity:</span>
        <div className="w-[86px] h-[42px] mt-[6px] rounded-l-md bg-[#1f1f1f] pl-[5px] leading-[42px] shrink-0">100 %</div>
        <div className="ml-[2px] mt-[6px] w-6 h-[42px] rounded-r-md bg-[#1f1f1f] flex items-center justify-center shrink-0"><Chevron /></div>
        <div className="ml-[6px] mt-[4px] w-[218px] h-10 rounded-md bg-[#444444] pl-[10px] pr-[11px] flex items-center justify-between shrink-0"><span>Normal</span><UpDown /></div>
        <svg viewBox="0 0 24 24" className="ml-[15px] w-6 h-6 shrink-0" fill="none"><GearShape cx={12} cy={12} r={12} color="#a6a6a6" hole={4} /></svg>
        <svg viewBox="0 0 16 26" className="ml-[19px] w-4 h-[26px] shrink-0" fill="none"><path d="M3 12V6A5 5 0 0 1 13 6V11" stroke="#808080" strokeWidth="2" /><rect y="12" width="16" height="14" rx="1.500" fill="#979797" /></svg>
      </div>
      <div className="h-[2px] bg-[#1a1a1a] shrink-0" />
      <div className="h-[618px] shrink-0 flex overflow-hidden">
        <div className="flex flex-col w-[498px] shrink-0">
          {layers.map((l, i) => <LayerRow key={i} layer={l} />)}
        </div>
        <div className="flex-1 bg-[#323232] pt-[69px] pl-2"><div className="w-4 h-[62px] rounded-full bg-[#555]" /></div>
      </div>
      <div className="h-[2px] bg-[#2a2a2a] shrink-0" />
      <div className="h-[66px] shrink-0 flex items-center pb-[2px]">
        <div className="ml-[9px] w-[42px] h-10 rounded-lg bg-[#1f1f1f] flex items-center justify-center shrink-0">
          <svg viewBox="0 0 26 26" className="w-[26px] h-[26px]" fill="none" stroke="#9b9b9b" strokeWidth="2"><rect x="2" y="2" width="15" height="15" rx="2" /><path d="M19.500 6V20.500H6M23.500 9V24.500H10" strokeWidth="1.600" /></svg>
        </div>
        <svg viewBox="0 0 32 28" className="ml-[113px] w-8 h-7 shrink-0"><rect width="32" height="28" rx="2" fill="#a2a2a2" /><circle cx="16" cy="14" r="8" fill="#323232" /></svg>
        <svg viewBox="0 0 32 32" className="ml-[14px] w-8 h-8 shrink-0" fill="none"><circle cx="16" cy="16" r="15" stroke="#a2a2a2" strokeWidth="2" /><path d="M24 8A11.500 11.500 0 0 1 8 24Z" fill="#a2a2a2" /></svg>
        <div className="ml-[14px] w-6 h-8 border-y-2 border-[#a2a2a2] shrink-0 flex items-center justify-center"><span className="text-[26px] leading-7 font-bold tracking-[-3px] scale-x-[0.82] -ml-[1px] text-[#a2a2a2]">FX</span></div>
        <svg viewBox="0 0 30 32" className="ml-4 w-[30px] h-8 shrink-0" fill="none" stroke="#a2a2a2" strokeWidth="1.800"><path d="M8 1H21C21 8 29 12 29 24V29Q29 31 27 31H1C1 17 9 14 8 1ZM13 1C14 14 8 20 10 31M17 1C17 12 22 18 19 31M8 12Q16 16 25 12M3 22Q15 26 28 21" /></svg>
        <svg viewBox="0 0 30 32" className="ml-[72px] w-[30px] h-8 shrink-0" fill="none" stroke="#a2a2a2" strokeWidth="2"><path d="M15 1H3Q1 1 1 3V29Q1 31 3 31H21Q23 31 23 29V14" /><path d="M22 0V10M17 5H28" /><path d="M6 12.500H16M6 18.500H18M6 24.500H18" strokeWidth="3.500" /></svg>
        <svg viewBox="0 0 24 32" className="ml-4 w-6 h-8 shrink-0" fill="none"><rect x="1" y="1" width="22" height="30" rx="1.500" stroke="#a2a2a2" strokeWidth="2" /><path d="M6 6h4v4h-4zM14 6h4v4h-4zM10 10h4v4h-4zM6 14h4v4h-4zM14 14h4v4h-4zM10 18h4v4h-4zM6 22h4v4h-4zM14 22h4v4h-4z" fill="#a2a2a2" /></svg>
        <svg viewBox="0 0 24 32" className="ml-[22px] w-6 h-8 shrink-0" fill="none" stroke="#a2a2a2" strokeWidth="2"><path d="M1 8V6H23V8M6 5V1H17V5M3 10V29Q3 31 5 31H19Q21 31 21 29V10M9 11V26M15 11V26" /></svg>
      </div>
    </div>
  );
}

function Field({ label, value, dd, cls = "", labelCls = "pt-[2px]" }: { label: string; value: string; dd?: boolean; cls?: string; labelCls?: string }) {
  return (
    <div className={`flex items-center ${cls}`}>
      <span className={`w-[31px] text-right shrink-0 text-[#b4b4b4] ${labelCls}`}>{label}</span>
      <div className={`ml-[10px] h-[38px] bg-[#1f1f1f] pl-[5px] leading-[38px] tracking-[-0.2px] text-[#d2d2d2] shrink-0 ${dd ? "w-[92px] rounded-l-md" : "w-[118px] rounded-md"}`}>{value}</div>
      {dd && <div className="ml-[2px] w-6 h-[38px] rounded-r-md bg-[#1f1f1f] flex items-center justify-center"><Chevron /></div>}
    </div>
  );
}

function TransformPanel() {
  const pts = [0, 1, 2];
  return (
    <div className="h-[296px] shrink-0 flex flex-col bg-[#363636] text-[20.5px]">
      <PanelTabs tabs={[{ label: "Transform", w: "w-[122px]" }, { label: "Navigator", w: "w-[119px]" }, { label: "History", w: "w-[92px]" }]} />
      <div className="flex pt-[27px]">
        <svg viewBox="0 0 80 80" className="ml-[29px] mt-[18px] w-20 h-20 shrink-0">
          <rect x="11" y="11" width="66" height="66" fill="#6b6b6b" />
          {pts.map((i) => pts.map((j) => <rect key={`${i}${j}`} x={5.500 + i * 32.500} y={6 + j * 32.500} width="11" height="11" fill="#a6a6a6" />))}
          <rect x="2" y="2" width="19" height="19" fill="#fff" />
        </svg>
        <div className="ml-[37px] w-[159px] flex flex-col">
          <Field label="X:" value="10,2 mm" />
          <Field label="Y:" value="16,3 mm" cls="mt-[6px]" />
          <Field label="R:" value="0 °" dd cls="mt-[14px]" />
          <div className="flex items-center mt-[18px] ml-[41px] text-[#b4b4b4]">
            <div className="w-6 h-6 rounded-md bg-[#1f1f1f] flex items-center justify-center">
              <svg viewBox="0 0 14 12" className="w-[14px] h-3" fill="none"><path d="M1 6.500L5 11L13 1" stroke="#e6e6e6" strokeWidth="2" /></svg>
            </div>
            <span className="ml-[7px] leading-6 pt-px tracking-[0.3px]">1 : 1</span>
          </div>
        </div>
        <div className="ml-[17px] w-[159px] flex flex-col">
          <Field label="W:" value="70,5 mm" />
          <Field label="H:" value="89,8 mm" cls="mt-[6px]" labelCls="pb-[5px]" />
          <Field label="S:" value="0 °" dd cls="mt-[14px]" />
          <div className="flex items-start mt-[14px] justify-end gap-[2px]">
            <div className="w-[52px] h-10 rounded-lg bg-[#444444] flex items-center justify-center">
              <svg viewBox="0 0 28 26" className="w-7 h-[26px]" fill="none"><path d="M1 8V1H27V25H19" stroke="#dcdcdc" strokeWidth="2" strokeDasharray="7 2.500" /><rect y="12" width="16" height="14" rx="3" fill="#dcdcdc" /></svg>
            </div>
            <div className="w-6 h-[38px] rounded-lg bg-[#444444] flex items-center justify-center"><Chevron /></div>
          </div>
        </div>
        <svg viewBox="0 0 18 40" className="ml-3 mt-[21px] w-[18px] h-10 shrink-0" fill="none" stroke="#808080" strokeWidth="2"><path d="M4 16V4Q4 1 7 1H11Q14 1 14 4V16M4 24V36Q4 39 7 39H11Q14 39 14 36V24M0 20H6M12 20H18" /></svg>
      </div>
    </div>
  );
}

export default function App() {
  return (
    <div className="w-[2880px] h-[1800px] bg-black overflow-hidden font-['Inter',sans-serif]">
      <div className="w-[2880px] h-[1800px] rounded-[18px] overflow-hidden flex flex-col bg-[#0e0e0e]">
        <TopBar />
        <div className="h-[2px] shrink-0 bg-[#0e0e0e]" />
        <ContextBar />
        <div className="h-[2px] shrink-0 bg-[#0e0e0e]" />
        <div className="h-[1588px] shrink-0 flex">
          <ToolStrip />
          <div className="w-[2px] shrink-0 bg-[#0e0e0e]" />
          <DocumentArea />
          <div className="w-[4px] shrink-0 bg-[#0e0e0e]" />
          <div className="w-[528px] shrink-0 flex flex-col gap-1">
            <ColourPanel />
            <LayersPanel />
            <TransformPanel />
          </div>
        </div>
        <div className="h-[2px] shrink-0 bg-[#0e0e0e]" />
        <div className="h-10 shrink-0 bg-[#363636] flex items-center pl-10 pb-px text-[20.8px] text-[#c0c0c0]">
          <span className="whitespace-pre">
            <b className="text-white">Drag</b> or <b className="text-white">Click</b> to create Art text. <b className="text-white">Click</b> an object to select it.
          </span>
        </div>
      </div>
    </div>
  );
}
